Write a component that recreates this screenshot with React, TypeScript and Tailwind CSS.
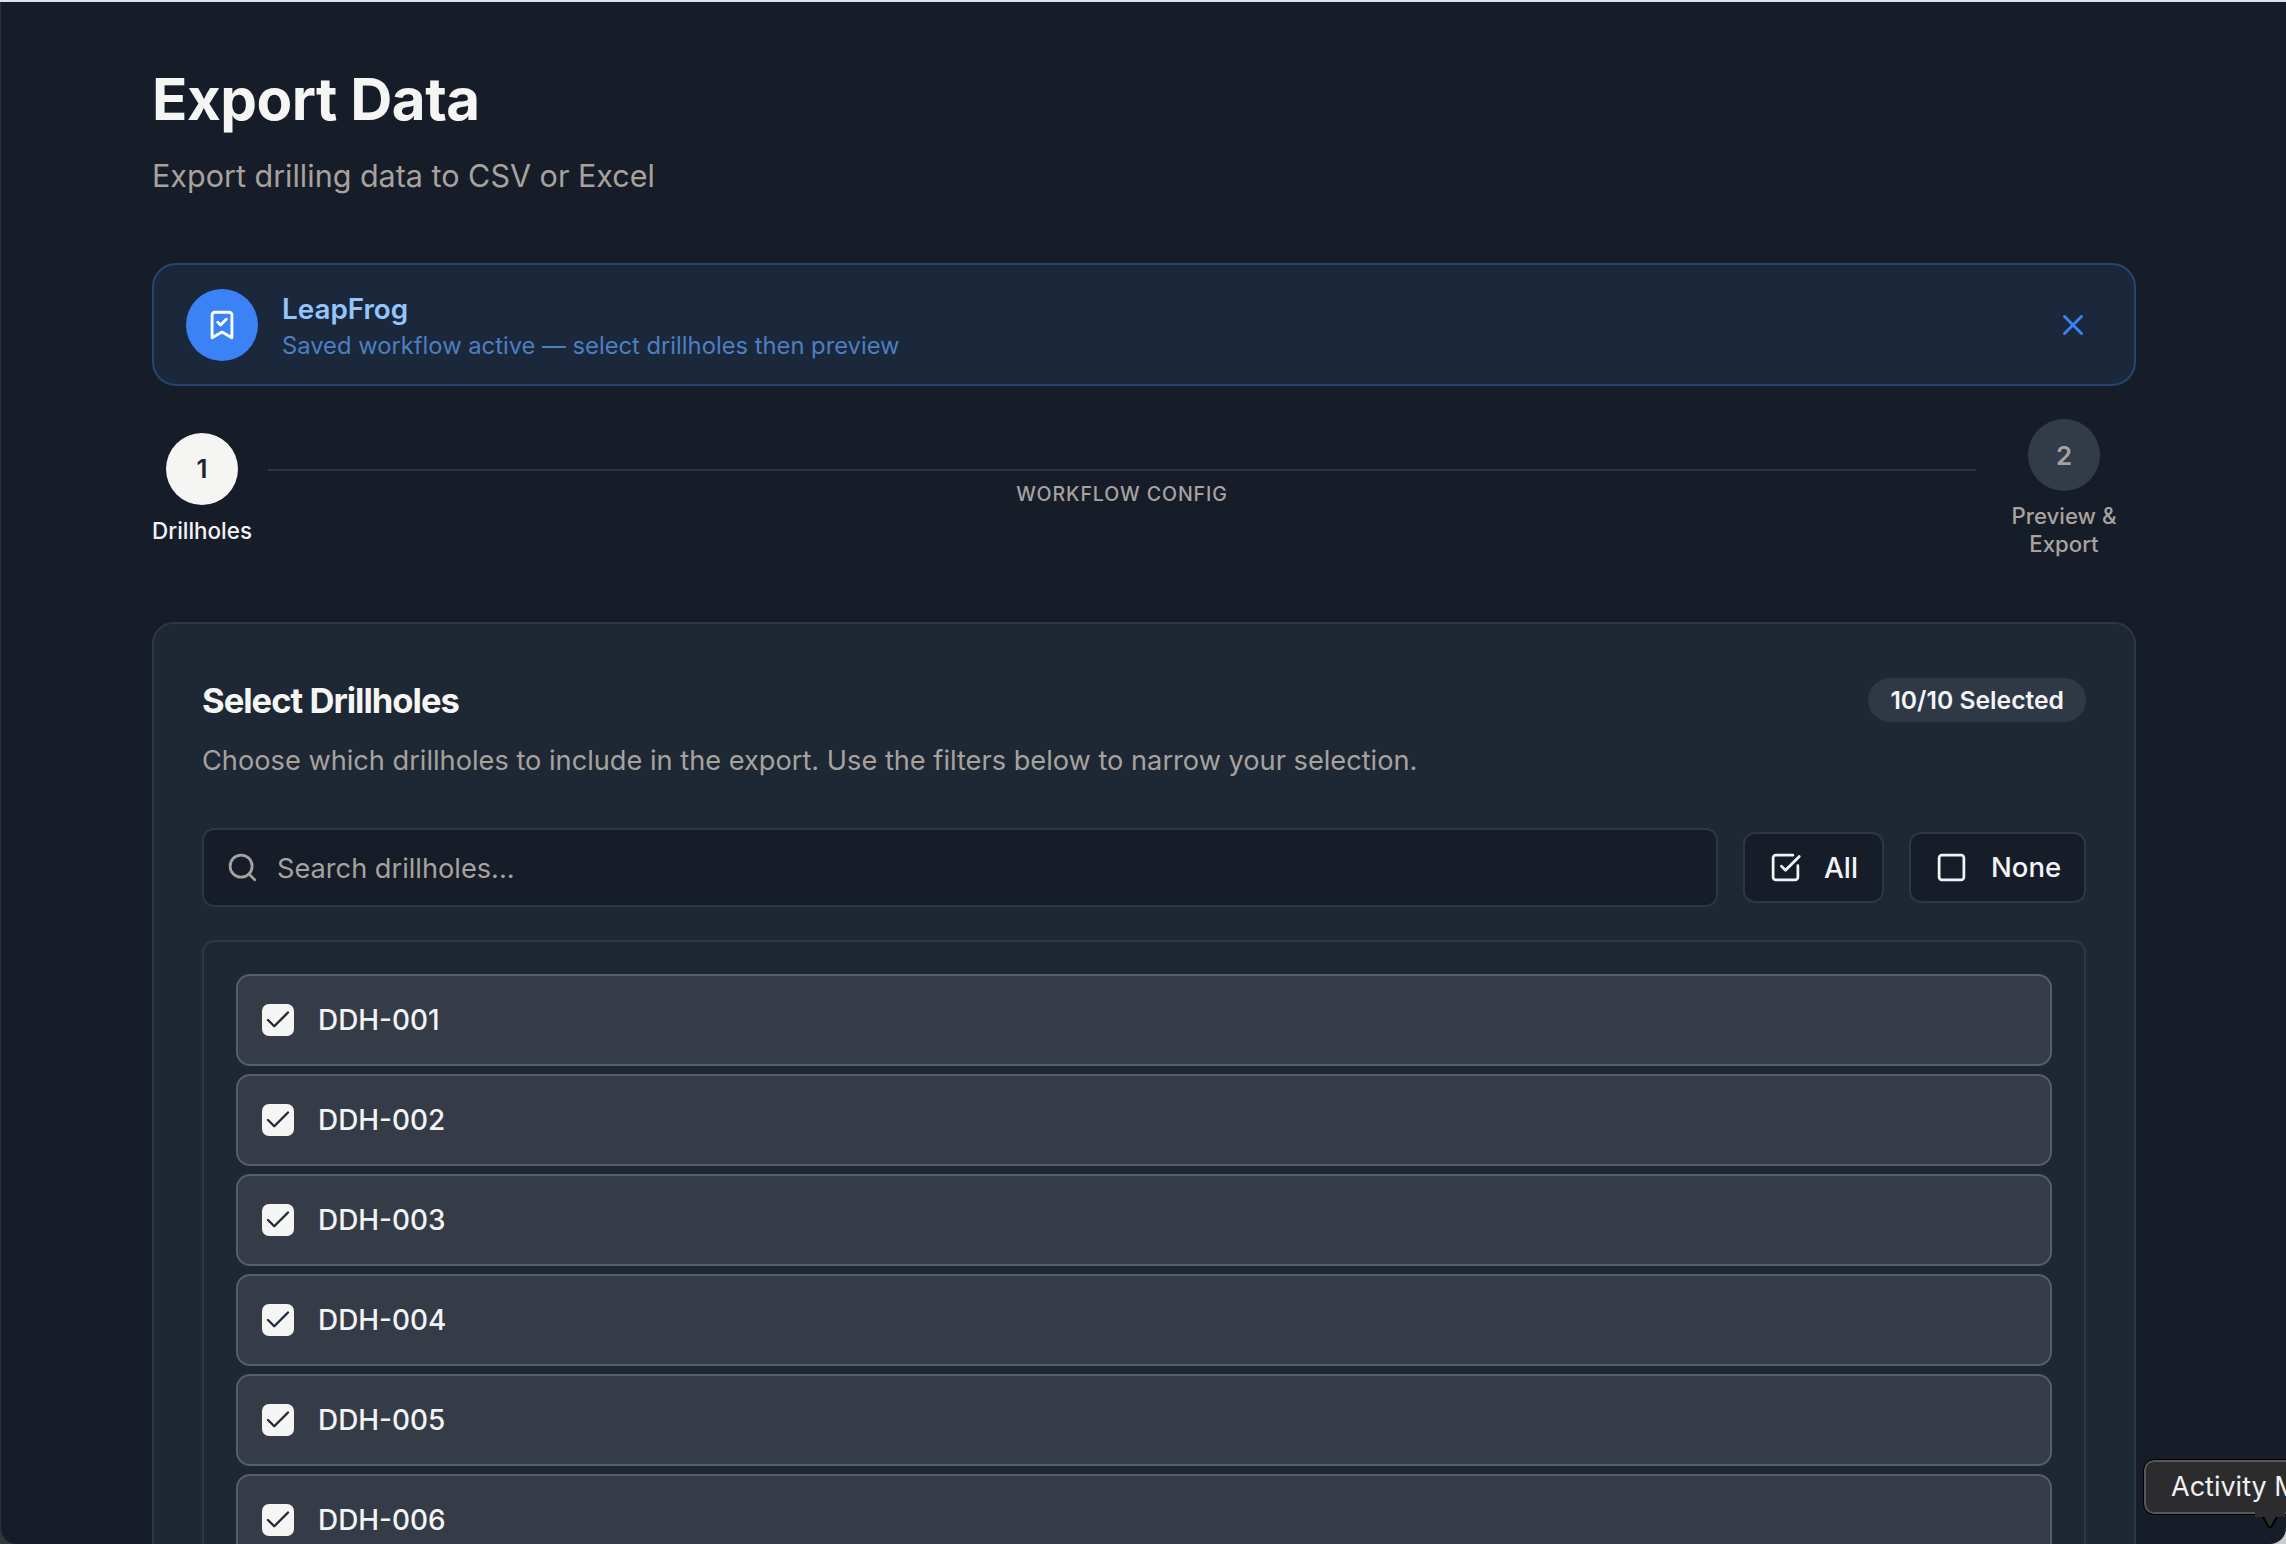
import { BookmarkCheck, Check, Search, Square, SquareCheckBig, X } from "lucide-react";

const holes = ["DDH-001", "DDH-002", "DDH-003", "DDH-004", "DDH-005", "DDH-006"];

export default function App() {
  return (
    <div className="h-[1544px] w-full overflow-hidden border-t-2 border-[#dfe3ea] bg-[linear-gradient(to_right,#33363b,#c9ccd1)] font-['Inter',sans-serif]">
      <div className="relative h-[1542px] overflow-hidden rounded-b-[16px] border-l border-[#2b323d] bg-[#161d29] pl-[151px] pr-[150px] pt-[62px]">
        <h1 className="h-[70px] text-[58.3px] font-bold leading-[70px] tracking-[-0.5px] text-[#f5f5f4]">Export Data</h1>
        <p className="mt-[22px] h-[40px] text-[30.5px] leading-[40px] text-[#a8a29e]">Export drilling data to CSV or Excel</p>

        <div className="mt-[67px] flex h-[123px] items-center rounded-[24px] border-2 border-[#234571] bg-[#1b283c] pl-[32px] pr-[44px]">
          <div className="flex h-[72px] w-[72px] shrink-0 items-center justify-center rounded-full bg-[#3b82f6]">
            <BookmarkCheck size={34} strokeWidth={2} className="text-white" />
          </div>
          <div className="ml-[24px] flex-1 pt-[5px]">
            <div className="h-[35px] text-[27.8px] font-semibold leading-[35px] text-[#93c5fd]">LeapFrog</div>
            <div className="h-[36px] pt-[1px] text-[23.75px] leading-[36px] text-[#4d7fc0]">Saved workflow active — select drillholes then preview</div>
          </div>
          <X size={34} strokeWidth={2} className="text-[#3b82f6]" />
        </div>

        <div className="mt-[33px] flex h-[139px] items-center">
          <div className="flex w-[100px] shrink-0 flex-col items-center">
            <div className="flex h-[72px] w-[72px] items-center justify-center rounded-full bg-[#f5f5f4] text-[26px] font-semibold text-[#1c2431]">1</div>
            <div className="mt-[12px] h-[28px] whitespace-nowrap text-[22.4px] font-medium leading-[28px] text-[#f3f4f6]">Drillholes</div>
          </div>
          <div className="mx-[16px] mb-[4px] flex flex-1 flex-col items-center">
            <div className="h-[2px] w-full bg-[#2d3743]" />
            <div className="mt-[13px] h-[20px] text-[19.6px] font-medium leading-[20px] tracking-[0.9px] text-[#a8a29e]">WORKFLOW CONFIG</div>
          </div>
          <div className="flex w-[144px] shrink-0 flex-col items-center">
            <div className="flex h-[72px] w-[72px] items-center justify-center rounded-full bg-[#323c49] text-[26px] font-semibold text-[#a8a29e]">2</div>
            <div className="mt-[11px] text-center text-[22.2px] font-medium leading-[28px] text-[#a8a29e]">Preview &amp;<br />Export</div>
          </div>
        </div>

        <div className="mt-[64px] rounded-[22px] border-2 border-[#2d3743] bg-[#1e2834] px-[48px] pt-[54px] pb-[48px]">
          <div className="flex h-[44px] items-center justify-between">
            <h2 className="text-[34.6px] font-bold leading-[44px] tracking-[-1px] text-[#f5f5f4]">Select Drillholes</h2>
            <span className="flex h-[44px] items-center rounded-full bg-[#2f3946] px-[22px] pt-[1px] text-[24.7px] font-semibold text-[#f3f4f6]">10/10 Selected</span>
          </div>
          <p className="mt-[18px] h-[40px] pt-[1px] text-[27.2px] leading-[40px] text-[#a8a29e]">Choose which drillholes to include in the export. Use the filters below to narrow your selection.</p>

          <div className="mt-[48px] flex h-[79px] items-center">
            <div className="flex h-[79px] flex-1 items-center rounded-[12px] border-2 border-[#2d3743] bg-[#161d29] pl-[22px]">
              <Search size={33} strokeWidth={2} className="text-[#a8a29e]" />
              <span className="ml-[18px] pt-[3px] text-[27.2px] text-[#a8a29e]">Search drillholes...</span>
            </div>
            <button className="ml-[25px] flex h-[71px] w-[141px] items-center rounded-[12px] border-2 border-[#2d3743] bg-[#161d29] pl-[24px] text-[28px] font-medium text-[#f3f4f6]">
              <SquareCheckBig size={33} strokeWidth={2} />
              <span className="ml-[22px]">All</span>
            </button>
            <button className="ml-[25px] flex h-[71px] w-[177px] items-center rounded-[12px] border-2 border-[#2d3743] bg-[#161d29] pl-[24px] text-[27.5px] font-medium text-[#f3f4f6]">
              <Square size={33} strokeWidth={2} />
              <span className="ml-[23px]">None</span>
            </button>
          </div>

          <div className="mt-[33px] flex flex-col gap-[8px] rounded-[12px] border-2 border-[#2d3743] p-[32px]">
            {holes.map((h) => (
              <div key={h} className="flex h-[92px] items-center rounded-[14px] border-2 border-[#565e6a] bg-[#353b47] pl-[24px]">
                <span className="flex h-[32px] w-[32px] items-center justify-center rounded-[7px] bg-[#f5f5f4] text-[#1f2937]">
                  <Check size={30} strokeWidth={1.9} />
                </span>
                <span className="ml-[24px] pt-[1px] text-[27.9px] font-medium text-[#f3f4f6]">{h}</span>
              </div>
            ))}
          </div>
        </div>

        <div className="absolute left-[2143px] top-[1458px] h-[54px] w-[170px]">
          <svg className="absolute left-[108px] top-[49px]" width="36" height="22" viewBox="0 0 36 22">
            <path d="M2 4 L9 4 L16 17 Q18 20 20 17 L27 4 L34 4" fill="#2c2c2e" stroke="#000000" strokeWidth="2" />
          </svg>
          <div className="relative flex h-[54px] w-full items-center rounded-[10px] border-2 border-[#58585a] bg-[#2c2c2e] pl-[25px] text-[27px] whitespace-nowrap text-[#f0f0f0] outline-1 outline-black">
            Activity Monitor
          </div>
          <svg className="absolute left-[111px] top-[49px]" width="30" height="8" viewBox="0 0 30 8">
            <rect x="0" y="0" width="30" height="8" fill="#2c2c2e" />
          </svg>
        </div>
      </div>
    </div>
  );
}
